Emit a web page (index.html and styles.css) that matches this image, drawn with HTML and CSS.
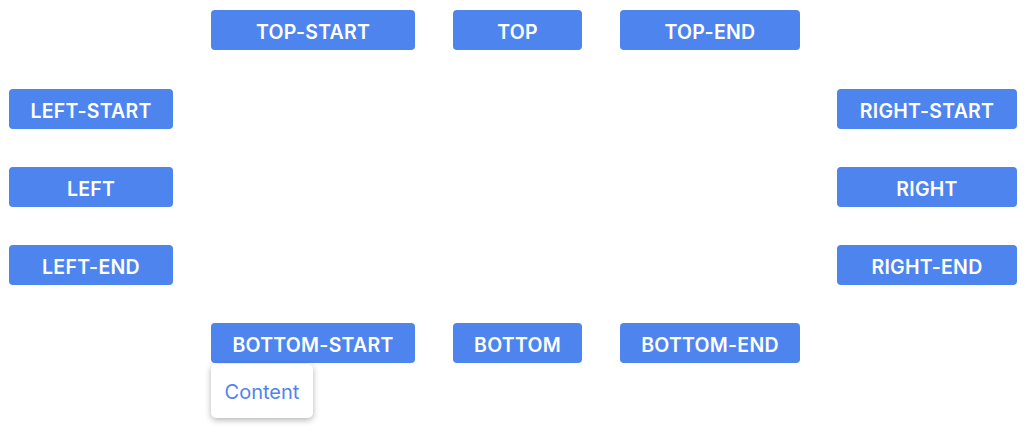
FILE: index.html
```html
<!DOCTYPE html>
<html>
<head>
<meta charset="utf-8">
<link rel="stylesheet" href="styles.css">
</head>
<body>
<div class="page">
  <div class="hrow">
    <button class="btn w-wide">TOP-START</button>
    <button class="btn w-narrow">TOP</button>
    <button class="btn w-mid">TOP-END</button>
  </div>
  <div class="mid">
    <div class="col col-left">
      <button class="btn">LEFT-START</button>
      <button class="btn">LEFT</button>
      <button class="btn">LEFT-END</button>
    </div>
    <div class="col col-right">
      <button class="btn">RIGHT-START</button>
      <button class="btn">RIGHT</button>
      <button class="btn">RIGHT-END</button>
    </div>
  </div>
  <div class="hrow">
    <div class="anchor">
      <button class="btn w-wide">BOTTOM-START</button>
      <div class="popover">Content</div>
    </div>
    <button class="btn w-narrow">BOTTOM</button>
    <button class="btn w-mid">BOTTOM-END</button>
  </div>
</div>
</body>
</html>
```

FILE: styles.css
```css
html, body {
  margin: 0;
  background: #ffffff;
}
body {
  min-height: 434px;
}
.page {
  padding: 10px 7px 0 9px;
  display: flex;
  flex-direction: column;
  gap: 38px;
  font-family: Inter, "Noto Sans", sans-serif;
}
.hrow {
  display: flex;
  align-items: flex-start;
  gap: 38px;
  margin-left: 202px;
}
.mid {
  display: flex;
  justify-content: space-between;
  margin-top: 1px;
}
.col {
  display: flex;
  flex-direction: column;
  gap: 38px;
}
.col-left .btn { width: 164px; }
.col-right .btn { width: 180px; }
.btn {
  box-sizing: border-box;
  height: 40px;
  border: none;
  border-radius: 4px;
  background: #4e84ee;
  color: #ffffff;
  font-family: Inter, "Noto Sans", sans-serif;
  font-weight: 600;
  font-size: 19.5px;
  letter-spacing: 0.25px;
  padding: 3px 0 0 0;
  text-align: center;
  cursor: pointer;
}
.w-wide { width: 204px; }
.w-narrow { width: 129px; }
.w-mid { width: 180px; }
.anchor {
  display: flex;
  flex-direction: column;
  align-items: flex-start;
  gap: 1px;
}
.popover {
  width: 102px;
  height: 54px;
  box-sizing: border-box;
  padding-top: 2px;
  background: #ffffff;
  border-radius: 5px;
  box-shadow: 0 2px 6px rgba(0, 0, 0, 0.3);
  color: #4e84ee;
  font-family: Inter, "Noto Sans", sans-serif;
  font-size: 20px;
  display: flex;
  align-items: center;
  justify-content: center;
}
```
